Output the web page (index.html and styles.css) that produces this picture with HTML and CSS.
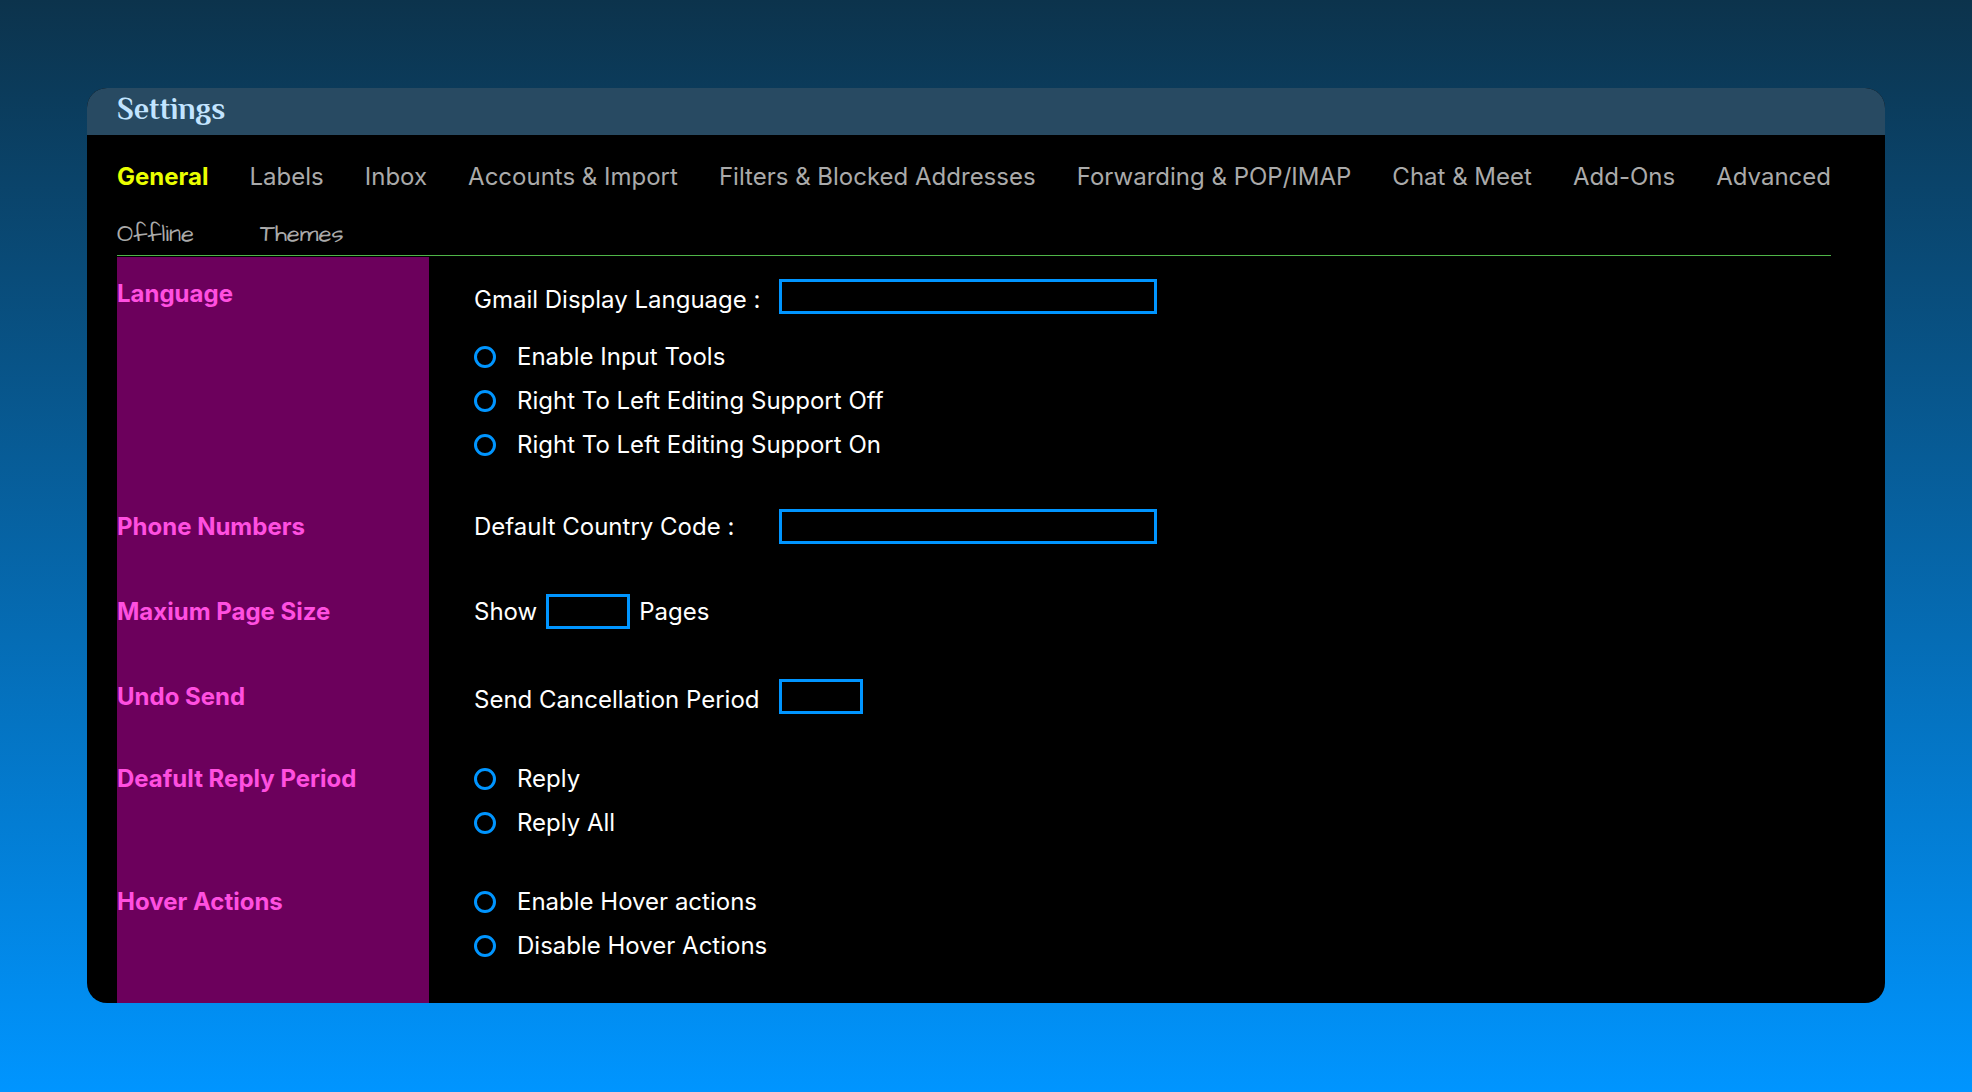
FILE: index.html
```html
<!DOCTYPE html>
<html lang="en">
<head>
<meta charset="utf-8">
<meta name="viewport" content="width=device-width, initial-scale=1">
<title>Settings</title>
<link rel="stylesheet" href="styles.css">
</head>
<body>
<main class="card">
  <header class="card-header"><h1 class="title">Settings</h1></header>
  <div class="card-body">
    <nav class="tabs">
      <ul class="tab-row">
        <li><a class="tab tab-active" href="#general">General</a></li>
        <li><a class="tab" href="#labels">Labels</a></li>
        <li><a class="tab" href="#inbox">Inbox</a></li>
        <li><a class="tab" href="#accounts">Accounts &amp; Import</a></li>
        <li><a class="tab" href="#filters">Filters &amp; Blocked Addresses</a></li>
        <li><a class="tab" href="#forwarding">Forwarding &amp; POP/IMAP</a></li>
        <li><a class="tab" href="#chat">Chat &amp; Meet</a></li>
        <li><a class="tab" href="#addons">Add-Ons</a></li>
        <li><a class="tab" href="#advanced">Advanced</a></li>
      </ul>
      <ul class="tab-row tab-row-script">
        <li><a class="tab" href="#offline">Offline</a></li>
        <li><a class="tab" href="#themes">Themes</a></li>
      </ul>
    </nav>
    <form class="settings">
      <section class="row">
        <h2 class="row-title">Language</h2>
        <div class="options">
          <div class="field field-low">
            <label class="field-label" for="language">Gmail Display Language :</label>
            <input class="box box-wide" id="language" type="text">
          </div>
          <div class="choices">
            <label class="choice"><input class="radio" type="radio" name="lang">Enable Input Tools</label>
            <label class="choice"><input class="radio" type="radio" name="lang">Right To Left Editing Support Off</label>
            <label class="choice"><input class="radio" type="radio" name="lang">Right To Left Editing Support On</label>
          </div>
        </div>
      </section>
      <section class="row row-single">
        <h2 class="row-title">Phone Numbers</h2>
        <div class="field">
          <label class="field-label" for="country">Default Country Code :</label>
          <input class="box box-wide" id="country" type="text">
        </div>
      </section>
      <section class="row row-single">
        <h2 class="row-title">Maxium Page Size</h2>
        <div class="field field-inline">
          <label for="pages">Show</label>
          <input class="box" id="pages" type="text">
          <span>Pages</span>
        </div>
      </section>
      <section class="row row-single">
        <h2 class="row-title">Undo Send</h2>
        <div class="field field-low">
          <label class="field-label" for="undo">Send Cancellation Period</label>
          <input class="box" id="undo" type="text">
        </div>
      </section>
      <section class="row">
        <h2 class="row-title">Deafult Reply Period</h2>
        <div class="choices">
          <label class="choice"><input class="radio" type="radio" name="reply">Reply</label>
          <label class="choice"><input class="radio" type="radio" name="reply">Reply All</label>
        </div>
      </section>
      <section class="row">
        <h2 class="row-title">Hover Actions</h2>
        <div class="choices">
          <label class="choice"><input class="radio" type="radio" name="hover">Enable Hover actions</label>
          <label class="choice"><input class="radio" type="radio" name="hover">Disable Hover Actions</label>
        </div>
      </section>
    </form>
  </div>
</main>
</body>
</html>
```
FILE: styles.css
```css
* { box-sizing: border-box; margin: 0; padding: 0; }

body {
  min-height: 100vh;
  padding: 88px 87px;
  background: linear-gradient(#0c334c, #0095ff);
  color: #fff;
  font: 400 24px/29px Inter, "Liberation Sans", sans-serif;
}

.card { border-radius: 20px; background: #000; overflow: hidden; }

.card-header { padding: 3px 30px 8px; background: #284a62; }

.title {
  color: #c2e4ff;
  font: 700 30px/36px Philosopher, "Liberation Serif", serif;
}

.card-body { padding: 27px 54px 0 30px; }

.tabs { padding-bottom: 6px; border-bottom: 1px solid #4fb548; }

.tab-row { display: flex; flex-wrap: wrap; justify-content: space-between; list-style: none; }

.tab-row-script {
  justify-content: flex-start;
  gap: 66px;
  margin-top: 29px;
  font-family: "Architects Daughter", Lato, sans-serif;
}

.tab { color: #aaa; text-decoration: none; }
.tab-active { color: #eaff00; font-weight: 700; }

.settings {
  display: flex;
  flex-direction: column;
  gap: 50px;
  margin-top: 1px;
  padding: 22px 0 43px;
  background: linear-gradient(#6c005c, #6c005c) left / 312px 100% no-repeat;
}

.row { display: grid; grid-template-columns: 312px 1fr; column-gap: 45px; }
.row-single { align-items: center; }

.row-title { color: #ff4fe0; font-size: 24px; line-height: 29px; font-weight: 700; }

.options { display: grid; gap: 28px; }

.field { display: flex; align-items: center; }
.field-low { align-items: flex-end; }
.field-inline { gap: 9px; }
.field-label { width: 305px; }

.box {
  width: 84px;
  height: 35px;
  padding: 0 8px;
  border: 3px solid #0095ff;
  background: transparent;
  color: inherit;
  font: inherit;
}
.box-wide { width: 378px; }

.choices { display: grid; gap: 15px; justify-items: start; }
.choice { display: flex; align-items: center; gap: 21px; }

.radio {
  appearance: none;
  width: 22px;
  height: 22px;
  border: 3px solid #0095ff;
  border-radius: 50%;
}
.radio:checked { background: #0095ff content-box; padding: 3px; }
```
